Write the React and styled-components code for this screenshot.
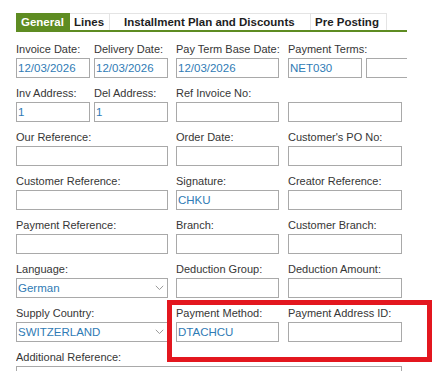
import React from 'react'
import styled, { createGlobalStyle } from 'styled-components'

const GREEN = '#5e8c22'
const BLUE = '#2f7bb5'
const LABEL = '#363636'
const BORDER = '#a9a9a9'

const Global = createGlobalStyle`
  html, body { margin: 0; padding: 0; background: #fff; }
  body { font-family: "Liberation Sans", Arial, sans-serif; }
`

const Wrapper = styled.div`
  position: relative;
  width: 433px;
  height: 371px;
  overflow: hidden;
`

const Page = styled.div`
  width: 391px;
  margin-left: 16px;
  padding-top: 13px;
  overflow: hidden;
`

const TabBar = styled.div`
  display: flex;
  border-bottom: 2px solid ${GREEN};
`

const Tab = styled.div`
  box-sizing: border-box;
  width: ${p => p.$w}px;
  height: 17px;
  padding-left: ${p => p.$pl}px;
  display: flex;
  align-items: center;
  font-size: 11.5px;
  font-weight: bold;
  white-space: nowrap;
  color: ${p => (p.$active ? '#fff' : '#1e1e1e')};
  background: ${p => (p.$active ? GREEN : '#fff')};
  border-top: 1px solid ${p => (p.$active ? GREEN : '#e4e4e4')};
  border-right: 1px solid ${p => (p.$active ? GREEN : '#e4e4e4')};
`

const Form = styled.div`
  display: grid;
  grid-template-columns: 78px 82px 112px 78px 41px;
  row-gap: 8px;
  margin-top: 10px;
`

const Field = styled.div`
  grid-column: ${p => p.$col};
  min-width: 0;
`

const Label = styled.div`
  height: 14px;
  line-height: 14px;
  margin-bottom: 2px;
  font-size: 11px;
  color: ${LABEL};
  white-space: nowrap;
`

const Box = styled.div`
  box-sizing: border-box;
  width: ${p => p.$w}px;
  height: 20px;
  border: 1px solid ${BORDER};
  background: #fff;
  display: flex;
  align-items: center;
  justify-content: space-between;
  padding: 0 3px 0 1px;
  font-size: 11.5px;
  color: ${BLUE};
  white-space: nowrap;
`

const Chevron = () => (
  <svg width="9" height="6" viewBox="0 0 9 6">
    <path d="M0.8 0.8 L4.5 4.6 L8.2 0.8" fill="none" stroke="#9a9a9a" strokeWidth="1" />
  </svg>
)

const Highlight = styled.div`
  position: absolute;
  left: 167px;
  top: 300px;
  width: 265px;
  height: 62px;
  box-sizing: border-box;
  border: 5px solid #e3171f;
  pointer-events: none;
`

const rows = [
  [
    { col: '1', label: 'Invoice Date:', w: 74, value: '12/03/2026' },
    { col: '2', label: 'Delivery Date:', w: 74, value: '12/03/2026' },
    { col: '3', label: 'Pay Term Base Date:', w: 103, value: '12/03/2026' },
    { col: '4', label: 'Payment Terms:', w: 74, value: 'NET030' },
    { col: '5', label: '', w: 74 },
  ],
  [
    { col: '1', label: 'Inv Address:', w: 74, value: '1' },
    { col: '2', label: 'Del Address:', w: 74, value: '1' },
    { col: '3', label: 'Ref Invoice No:', w: 103 },
    { col: '4 / span 2', label: '', w: 114 },
  ],
  [
    { col: '1 / span 2', label: 'Our Reference:', w: 152 },
    { col: '3', label: 'Order Date:', w: 103 },
    { col: '4 / span 2', label: "Customer's PO No:", w: 114 },
  ],
  [
    { col: '1 / span 2', label: 'Customer Reference:', w: 152 },
    { col: '3', label: 'Signature:', w: 103, value: 'CHKU' },
    { col: '4 / span 2', label: 'Creator Reference:', w: 114 },
  ],
  [
    { col: '1 / span 2', label: 'Payment Reference:', w: 152 },
    { col: '3', label: 'Branch:', w: 103 },
    { col: '4 / span 2', label: 'Customer Branch:', w: 114 },
  ],
  [
    { col: '1 / span 2', label: 'Language:', w: 152, value: 'German', select: true },
    { col: '3', label: 'Deduction Group:', w: 103 },
    { col: '4 / span 2', label: 'Deduction Amount:', w: 114 },
  ],
  [
    { col: '1 / span 2', label: 'Supply Country:', w: 152, value: 'SWITZERLAND', select: true },
    { col: '3', label: 'Payment Method:', w: 103, value: 'DTACHCU' },
    { col: '4 / span 2', label: 'Payment Address ID:', w: 114 },
  ],
  [
    { col: '1 / span 5', label: 'Additional Reference:', w: 386 },
  ],
]

const tabs = [
  { name: 'General', w: 54, pl: 5, active: true },
  { name: 'Lines', w: 40, pl: 4 },
  { name: 'Installment Plan and Discounts', w: 201, pl: 14 },
  { name: 'Pre Posting', w: 76, pl: 4 },
]

export default function App() {
  return (
    <Wrapper>
      <Global />
      <Page>
        <TabBar>
          {tabs.map(t => (
            <Tab key={t.name} $w={t.w} $pl={t.pl} $active={t.active}>{t.name}</Tab>
          ))}
        </TabBar>
        <Form>
          {rows.flatMap((row, i) =>
            row.map((f, j) => (
              <Field key={i + '-' + j} $col={f.col}>
                <Label>{f.label}</Label>
                <Box $w={f.w}>
                  <span>{f.value}</span>
                  {f.select && <Chevron />}
                </Box>
              </Field>
            ))
          )}
        </Form>
      </Page>
      <Highlight />
    </Wrapper>
  )
}
